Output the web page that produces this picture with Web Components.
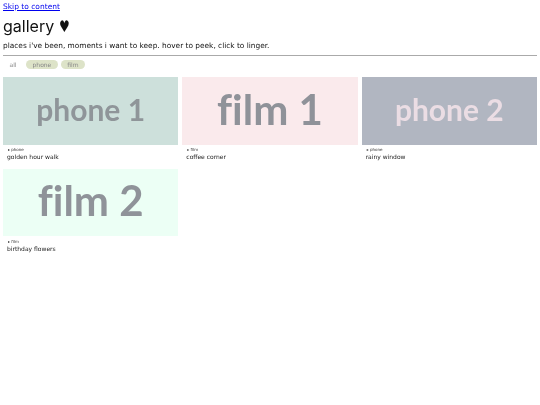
<!DOCTYPE html>
<html lang="en">
<head>
<meta charset="utf-8">
<title>gallery</title>
<style>
  html, body { margin: 0; padding: 0; background: #fff; }
  body { font-family: "DejaVu Sans", sans-serif; color: #111; }
</style>
</head>
<body>
<gallery-page>
  <gallery-card slot="card" tag="phone" caption="golden hour walk" label="phone 1" size="30" bg="#cde0db" fg="#8f9599"></gallery-card>
  <gallery-card slot="card" tag="film" caption="coffee corner" label="film 1" size="42" bg="#faeaec" fg="#8f9299"></gallery-card>
  <gallery-card slot="card" tag="phone" caption="rainy window" label="phone 2" size="30" bg="#b1b6c1" fg="#ebdde4"></gallery-card>
  <gallery-card slot="card" tag="film" caption="birthday flowers" label="film 2" size="42" bg="#ecfff5" fg="#8f9399"></gallery-card>
</gallery-page>
<script>
class GalleryCard extends HTMLElement {
  connectedCallback() {
    this.attachShadow({ mode: 'open' });
    this.shadowRoot.innerHTML = `
      <style>
        :host { display: block; }
        .pic {
          height: 67.5px;
          box-sizing: border-box;
          padding-bottom: 4px;
          display: flex;
          align-items: center;
          justify-content: center;
          background: ${this.getAttribute('bg')};
          color: ${this.getAttribute('fg')};
          font: 700 ${this.getAttribute('size')}px/1 Lato, sans-serif;
          font-variant-ligatures: none;
        }
        .meta { padding: 2.5px 4px 3.5px; }
        .tag { font-size: 4px; line-height: 6px; height: 6px; padding-left: 1px; color: #333; }
        .cap { font-size: 6px; line-height: 8px; color: #222; }
      </style>
      <div class="pic">${this.getAttribute('label')}</div>
      <div class="meta">
        <div class="tag">▸ ${this.getAttribute('tag')}</div>
        <div class="cap">${this.getAttribute('caption')}</div>
      </div>
    `;
  }
}

class GalleryPage extends HTMLElement {
  connectedCallback() {
    this.attachShadow({ mode: 'open' });
    this.shadowRoot.innerHTML = `
      <style>
        :host { display: block; padding: 1px 3px 0; will-change: transform; }
        a { font: 7.5px/11px "DejaVu Sans", sans-serif; color: #00e; display: block; }
        h1 { font: 400 16px/20px Inter, sans-serif; margin: 4px 0 3px; }
        h1 span { display: inline-block; font-family: "DejaVu Sans", sans-serif; transform: scaleX(.75); transform-origin: left; }
        p { font-size: 7.4px; line-height: 12px; margin: 0 0 3px; }
        hr { border: 0; border-top: 1px solid #aaa; margin: 0; }
        .filters { display: flex; gap: 3px; padding: 4px 0; font-size: 6px; color: #888; }
        .filters span { padding: 1px 6.5px; border-radius: 8px; line-height: 7px; }
        .on { background: #dde3c8; }
        .grid { display: grid; grid-template-columns: repeat(3, 1fr); gap: 4px; margin-top: 4px; }
      </style>
      <a href="#main">Skip to content</a>
      <h1>gallery <span>♥</span></h1>
      <p>places i've been, moments i want to keep. hover to peek, click to linger.</p>
      <hr>
      <div class="filters"><span>all</span><span class="on">phone</span><span class="on">film</span></div>
      <div class="grid" id="main"><slot name="card"></slot></div>
    `;
  }
}

customElements.define('gallery-card', GalleryCard);
customElements.define('gallery-page', GalleryPage);
</script>
</body>
</html>
